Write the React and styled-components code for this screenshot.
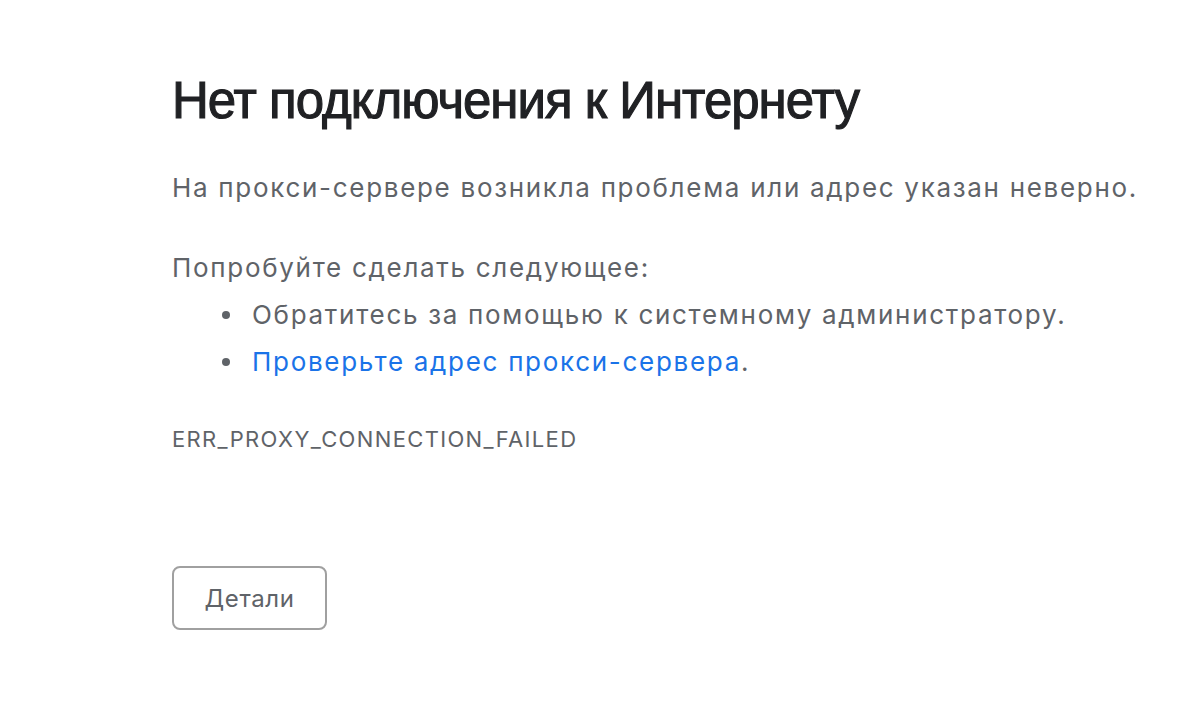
import React from "react";
import styled, { createGlobalStyle } from "styled-components";

const Global = createGlobalStyle`
  html, body { margin: 0; padding: 0; background: #ffffff; }
  body { font-family: Inter, "Noto Sans", "Liberation Sans", sans-serif; }
`;

const Page = styled.main`
  padding: 71px 0 0 172px;
  display: flex;
  flex-direction: column;
  align-items: flex-start;
`;

const Title = styled.h1`
  margin: 0;
  font-family: "Liberation Sans", Arial, sans-serif;
  font-size: 51px;
  line-height: 60px;
  font-weight: 400;
  letter-spacing: -1px;
  -webkit-text-stroke: 1.1px #202124;
  color: #202124;
`;

const Text = styled.p`
  margin: ${(p) => p.$top || 0}px 0 0;
  font-size: 26px;
  line-height: 47px;
  letter-spacing: 1.7px;
  color: #5f6368;
`;

const List = styled.ul`
  margin: 0;
  padding: 0 0 0 50px;
  list-style: none;
`;

const Item = styled.li`
  position: relative;
  padding-left: 30px;
  font-size: 26px;
  line-height: 47px;
  letter-spacing: 1.7px;
  color: #5f6368;
  &::before {
    content: "";
    position: absolute;
    left: 0;
    top: 20px;
    width: 8px;
    height: 8px;
    border-radius: 50%;
    background: #5f6368;
  }
`;

const Link = styled.a`
  color: #1a73e8;
  text-decoration: none;
`;

const Code = styled.div`
  margin-top: 39px;
  font-size: 22px;
  line-height: 30px;
  letter-spacing: 1.35px;
  color: #5f6368;
`;

const Button = styled.button`
  margin-top: 112px;
  width: 155px;
  height: 64px;
  border: 2px solid #a0a0a0;
  border-radius: 8px;
  background: #ffffff;
  color: #5f6368;
  font-family: inherit;
  font-size: 24px;
  letter-spacing: 0.6px;
  padding: 0;
`;

export default function App() {
  return (
    <>
      <Global />
      <Page>
        <Title>Нет подключения к Интернету</Title>
        <Text $top={33}>На прокси-сервере возникла проблема или адрес указан неверно.</Text>
        <Text $top={33}>Попробуйте сделать следующее:</Text>
        <List>
          <Item>Обратитесь за помощью к системному администратору.</Item>
          <Item>
            <Link href="#">Проверьте адрес прокси-сервера</Link>.
          </Item>
        </List>
        <Code>ERR_PROXY_CONNECTION_FAILED</Code>
        <Button>Детали</Button>
      </Page>
    </>
  );
}
